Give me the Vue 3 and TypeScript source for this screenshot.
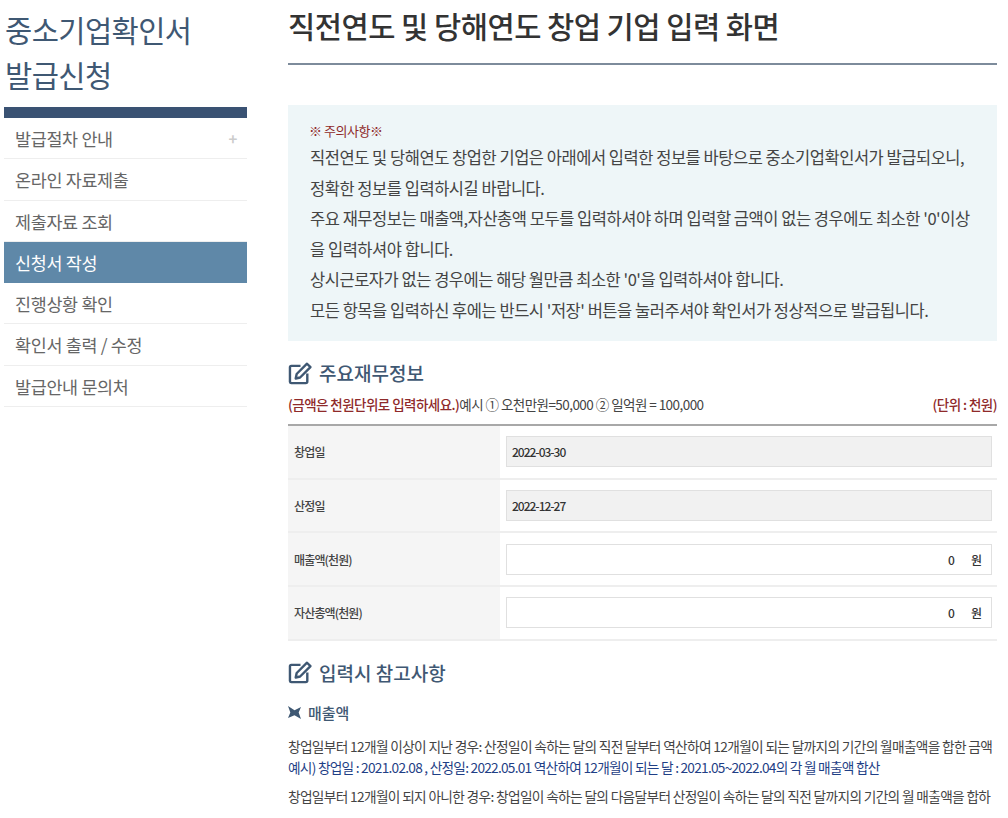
<script setup lang="ts">
const menu = [
  { label: '발급절차 안내', plus: true },
  { label: '온라인 자료제출' },
  { label: '제출자료 조회' },
  { label: '신청서 작성', active: true },
  { label: '진행상황 확인' },
  { label: '확인서 출력 / 수정' },
  { label: '발급안내 문의처' },
]
const rows = [
  { label: '창업일', value: '2022-03-30', readonly: true },
  { label: '산정일', value: '2022-12-27', readonly: true },
  { label: '매출액(천원)', value: '0', readonly: false },
  { label: '자산총액(천원)', value: '0', readonly: false },
]
</script>

<template>
  <div class="page">
    <aside class="side">
      <h2 class="side-title">중소기업확인서<br />발급신청</h2>
      <ul class="menu">
        <li v-for="m in menu" :key="m.label" :class="{ active: m.active }">
          <span>{{ m.label }}</span>
          <span v-if="m.plus" class="plus">+</span>
        </li>
      </ul>
    </aside>
    <main class="main">
      <h1 class="title">직전연도 및 당해연도 창업 기업 입력 화면</h1>
      <section class="notice">
        <p class="warn">※ 주의사항※</p>
        <p>직전연도 및 당해연도 창업한 기업은 아래에서 입력한 정보를 바탕으로 중소기업확인서가 발급되오니,<br />정확한 정보를 입력하시길 바랍니다.</p>
        <p>주요 재무정보는 매출액,자산총액 모두를 입력하셔야 하며 입력할 금액이 없는 경우에도 최소한 '0'이상<br />을 입력하셔야 합니다.</p>
        <p>상시근로자가 없는 경우에는 해당 월만큼 최소한 '0'을 입력하셔야 합니다.</p>
        <p>모든 항목을 입력하신 후에는 반드시 '저장' 버튼을 눌러주셔야 확인서가 정상적으로 발급됩니다.</p>
      </section>

      <h3 class="sec first">
        <svg class="edit" viewBox="0 0 26 24" fill="none" stroke="#3f5873" stroke-width="2.5">
          <path d="M13 4H3.5A1.6 1.6 0 0 0 2 5.6v15A1.6 1.6 0 0 0 3.5 22h15a1.6 1.6 0 0 0 1.6-1.6V12" />
          <path d="M9 12.5 19.8 1.8l3.6 3.6L12.6 16.2l-4.6 1Z" stroke-linejoin="round" />
        </svg>
        주요재무정보
      </h3>
      <div class="hint">
        <span><b>(금액은 천원단위로 입력하세요.)</b>예시 ① 오천만원=50,000 ② 일억원 = 100,000</span>
        <b>(단위 : 천원)</b>
      </div>
      <div class="table">
        <div v-for="r in rows" :key="r.label" class="row">
          <div class="th">{{ r.label }}</div>
          <div class="td">
            <div v-if="r.readonly" class="box ro">{{ r.value }}</div>
            <div v-else class="box num"><span>{{ r.value }}</span><span class="won">원</span></div>
          </div>
        </div>
      </div>

      <h3 class="sec second">
        <svg class="edit" viewBox="0 0 26 24" fill="none" stroke="#3f5873" stroke-width="2.5">
          <path d="M13 4H3.5A1.6 1.6 0 0 0 2 5.6v15A1.6 1.6 0 0 0 3.5 22h15a1.6 1.6 0 0 0 1.6-1.6V12" />
          <path d="M9 12.5 19.8 1.8l3.6 3.6L12.6 16.2l-4.6 1Z" stroke-linejoin="round" />
        </svg>
        입력시 참고사항
      </h3>
      <h4 class="sub">
        <svg class="pin" viewBox="0 0 14 14" fill="#3f5873">
          <path d="M0 0 7 4.5 14 1 11.5 7 14 14 7 10 0 13 2.5 7Z" />
        </svg>
        매출액
      </h4>
      <p class="line">창업일부터 12개월 이상이 지난 경우: 산정일이 속하는 달의 직전 달부터 역산하여 12개월이 되는 달까지의 기간의 월매출액을 합한 금액</p>
      <p class="line blue">예시) 창업일 : 2021.02.08 , 산정일: 2022.05.01 역산하여 12개월이 되는 달 : 2021.05~2022.04의 각 월 매출액 합산</p>
      <p class="line third">창업일부터 12개월이 되지 아니한 경우: 창업일이 속하는 달의 다음달부터 산정일이 속하는 달의 직전 달까지의 기간의 월 매출액을 합하</p>
    </main>
  </div>
</template>

<style>
html, body { margin: 0; background: #fff; overflow: hidden; }
</style>

<style scoped>
.page {
  width: 1008px;
  height: 818px;
  overflow: hidden;
  display: flex;
  box-sizing: border-box;
  padding-left: 4px;
  font-family: "Noto Sans CJK KR", "Noto Sans", sans-serif;
  color: #444;
}
.side { width: 243px; flex: none; }
.side-title {
  margin: 7px 0 0 1px;
  font-size: 29.6px;
  line-height: 45px;
  font-weight: 400;
  letter-spacing: -0.6px;
  color: #3f5873;
  white-space: nowrap;
}
.menu { list-style: none; margin: 10px 0 0; padding: 0; border-top: 11px solid #3a5273; }
.menu li {
  height: 40.3px;
  line-height: 41px;
  border-bottom: 1px solid #eee;
  padding: 0 11px;
  font-size: 17.4px;
  color: #666;
  display: flex;
  justify-content: space-between;
  letter-spacing: -0.3px;
}
.menu li.active { background: #5f88a8; color: #fff; border-bottom-color: #5f88a8; }
.plus { color: #ccc; font-size: 15px; margin-right: -1px; font-weight: 700; }
.main { width: 709px; margin-left: 41px; flex: none; }
.title {
  margin: 8px 0 0;
  height: 55px;
  line-height: 36px;
  font-size: 29.6px;
  font-weight: 500;
  color: #333;
  border-bottom: 2px solid #7d8b9b;
  letter-spacing: -0.5px;
  white-space: nowrap;
}
.notice {
  margin-top: 40px;
  height: 236px;
  box-sizing: border-box;
  background: #eef6f8;
  padding: 15px 22px;
  font-size: 16.5px;
  line-height: 30.6px;
  color: #444;
  letter-spacing: -0.47px;
}
.notice p { margin: 0; white-space: nowrap; }
.notice .warn { color: #8f2a2a; font-size: 13px; line-height: 22px; margin-left: -1px; }
.sec {
  margin: 0;
  display: flex;
  align-items: center;
  gap: 6px;
  font-size: 19px;
  line-height: 26px;
  font-weight: 500;
  color: #3f5873;
}
.sec.first { margin-top: 19px; }
.sec.second { margin-top: 19px; }
.edit { width: 25px; height: 23px; flex: none; }
.hint {
  margin-top: 8px;
  display: flex;
  justify-content: space-between;
  font-size: 13.5px;
  line-height: 20px;
  color: #444;
  letter-spacing: -0.55px;
  white-space: nowrap;
}
.hint b { font-weight: 500; color: #8f2a2a; }
.table { margin-top: 10px; border-top: 2px solid #a8a8a8; }
.row { display: flex; height: 51.7px; border-bottom: 2px solid #eee; }
.th {
  width: 212px;
  background: #f5f5f5;
  padding-left: 6px;
  box-sizing: border-box;
  display: flex;
  align-items: center;
  font-size: 12px;
  font-weight: 500;
  color: #444;
  letter-spacing: -0.85px;
}
.td { flex: 1; padding: 0 5px 0 6px; display: flex; align-items: center; }
.box {
  width: 100%;
  height: 31px;
  box-sizing: border-box;
  border: 1px solid #e0e0e0;
  display: flex;
  align-items: center;
  font-size: 12px;
  font-weight: 500;
  color: #333;
}
.box.ro { background: #f1f1f1; padding-left: 5px; letter-spacing: -1px; }
.box.num { justify-content: flex-end; padding-right: 9px; }
.won { margin-left: 16px; }
.sub {
  margin: 16px 0 0;
  display: flex;
  align-items: center;
  gap: 7px;
  font-size: 15px;
  line-height: 22px;
  font-weight: 500;
  color: #3f5873;
}
.pin { width: 13px; height: 13px; flex: none; }
.line {
  margin: 12px 0 0;
  font-size: 13.7px;
  line-height: 20px;
  color: #444;
  letter-spacing: -0.66px;
  white-space: nowrap;
}
.line.blue { margin-top: 1px; color: #1f3f86; letter-spacing: -0.75px; }
.line.third { margin-top: 9px; }
</style>
